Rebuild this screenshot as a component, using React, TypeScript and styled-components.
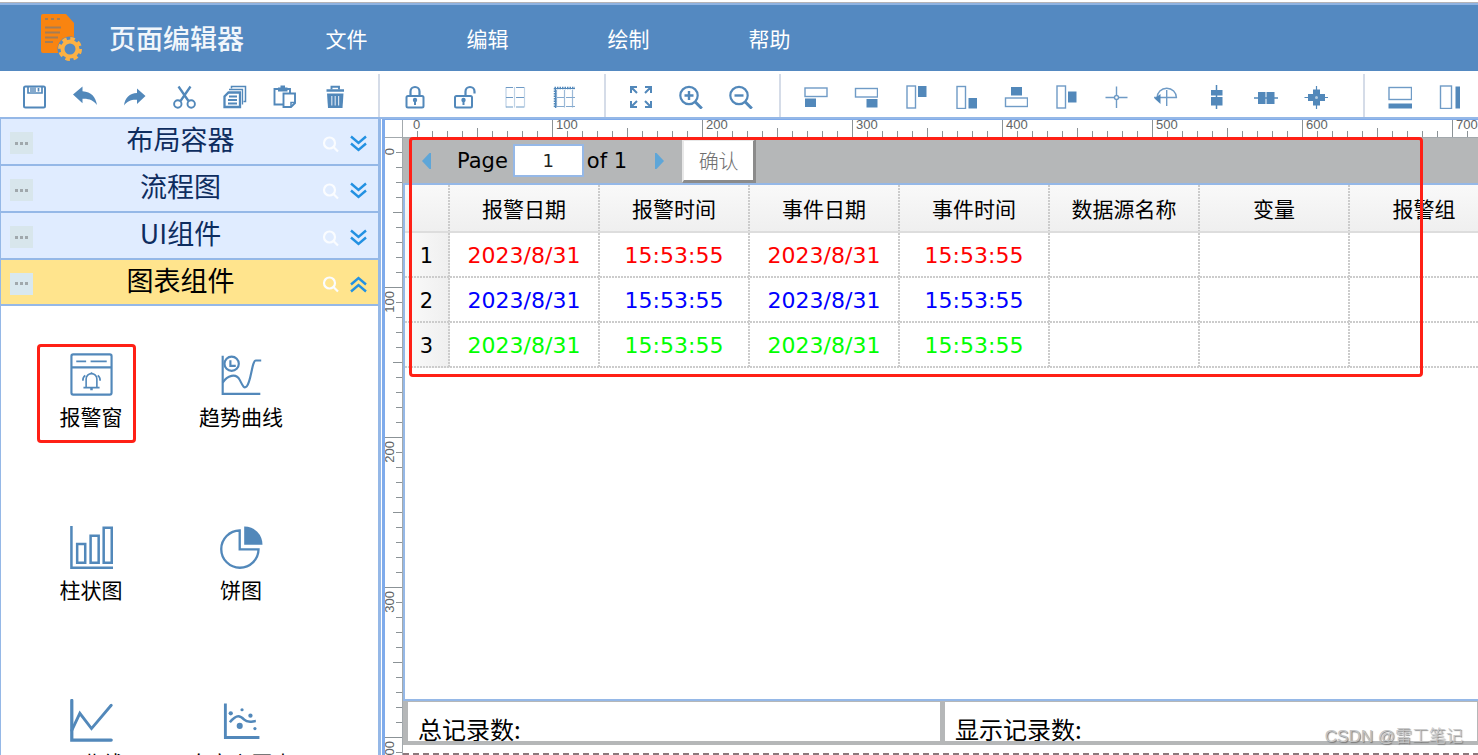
import React from 'react';
import styled, { createGlobalStyle } from 'styled-components';

const CJK = '"Noto Sans CJK SC", "Noto Sans", sans-serif';
const LATIN = '"DejaVu Sans", "Noto Sans CJK SC", sans-serif';
const LINE = '#95b8e7';
const INK = '#5288ba';

const GlobalStyle = createGlobalStyle`
  * { box-sizing: border-box; }
  body { margin: 0; background: #fff; overflow: hidden; }
  button { border: 0; padding: 0; background: none; color: inherit; font: inherit; cursor: pointer; }
  svg { display: block; }
`;

const Shell = styled.div`
  display: flex;
  flex-direction: column;
  height: 100vh;
  overflow: hidden;
  padding-top: 2px;
  font-family: ${CJK};
  font-weight: 400;
  color: #000;
`;

const Header = styled.header`
  flex: none;
  display: flex;
  align-items: center;
  height: 69px;
  padding-top: 2px;
  border-top: 1px solid #b5b3b6;
  box-shadow: inset 0 2px 0 #8fb3e2;
  background: #5489c1;
  color: #fff;
`;

const Brand = styled.div`
  display: flex;
  align-items: center;
  gap: 26px;
  width: 276px;
  padding-left: 39px;
`;

const BrandName = styled.h1`
  margin: 0;
  font-size: 27px;
  line-height: 36px;
  font-weight: 500;
  white-space: nowrap;
  color: #f1f6fb;
`;

const Menu = styled.nav`
  display: flex;
`;

const MenuItem = styled.button`
  width: 141px;
  height: 60px;
  font-size: 21px;
`;

const Toolbar = styled.div`
  flex: none;
  display: flex;
  height: 46px;
  padding-top: 3px;
  overflow: hidden;
`;

const ToolGroup = styled.div<{ $tail: number }>`
  flex: none;
  display: flex;
  padding: 0 ${p => p.$tail}px 0 10px;
  border-right: 2px solid #d5dce8;
`;

const Tool = styled.button`
  flex: none;
  display: grid;
  place-items: center;
  width: 50px;
  padding-top: 3px;
`;

const Workspace = styled.div`
  flex: 1;
  display: flex;
  min-height: 0;
  border-top: 2px solid ${LINE};
`;

const Sidebar = styled.aside`
  flex: none;
  width: 381px;
  overflow: hidden;
  border: solid ${LINE};
  border-width: 0 3px 0 1px;
`;

const Section = styled.div<{ $open?: boolean }>`
  display: flex;
  align-items: center;
  height: ${p => (p.$open ? 46 : 47)}px;
  padding: 0 11px 0 9px;
  border-bottom: 2px solid ${LINE};
  background: ${p => (p.$open ? '#ffe48d' : '#e0ecff')};
  color: ${p => (p.$open ? '#000' : '#0e2d5f')};
`;

const More = styled.button<{ $open?: boolean }>`
  display: flex;
  align-items: center;
  justify-content: center;
  gap: 2px;
  width: 23px;
  height: 22px;
  margin-top: 3px;
  background: ${p => (p.$open ? '#d9e8ef' : '#d8e6ec')};
`;

const Dot = styled.span`
  width: 3px;
  height: 3px;
  background: #a0a8ac;
`;

const SectionTitle = styled.button`
  flex: 1;
  padding: 0 14px 5px 20px;
  font-size: 27px;
  line-height: 38px;
`;

const SectionTools = styled.div`
  display: flex;
  align-items: center;
  gap: 10px;
  padding-top: 4px;
`;

const Palette = styled.div`
  display: grid;
  grid-template-columns: 150px 150px;
  row-gap: 74px;
  padding: 38px 0 0 15px;
`;

const PaletteItem = styled.button`
  position: relative;
  display: flex;
  flex-direction: column;
  align-items: center;
  gap: 6px;
  height: 99px;
  padding-top: 9px;
  font-size: 21px;
  line-height: 28px;
  white-space: nowrap;
`;

const Marker = styled.span<{ $x: number; $y: number; $w: number; $h: number }>`
  position: absolute;
  left: ${p => p.$x}px;
  top: ${p => p.$y}px;
  width: ${p => p.$w}px;
  height: ${p => p.$h}px;
  border: 3px solid #ff2016;
  border-radius: 4px;
  pointer-events: none;
`;

const Editor = styled.main`
  position: relative;
  flex: 1;
  min-width: 0;
  display: grid;
  grid-template: 18px 1fr / 18px 1fr;
  margin-left: 1px;
  border: solid #7fabeb;
  border-width: 1px 0 0 3px;
`;

const Corner = styled.div`
  border: solid #a3a9ad;
  border-width: 0 1px 1px 0;
`;

const RulerTop = styled.div`
  overflow: hidden;
  border-bottom: 1px solid #a3a9ad;
`;

const RulerLeft = styled.div`
  overflow: hidden;
  min-height: 0;
  border-right: 1px solid #a3a9ad;
`;

const Stage = styled.div`
  display: flex;
  flex-direction: column;
  min-width: 0;
  min-height: 0;
  overflow: hidden;
`;

const Pager = styled.div`
  flex: none;
  display: flex;
  align-items: center;
  height: 45px;
  padding: 1px 0 0 18px;
  background: #b5b7b8;
  font-family: ${LATIN};
  font-size: 21px;
`;

const PageLabel = styled.label`
  display: flex;
  align-items: center;
  gap: 5px;
  margin: 0 3px 0 25px;
`;

const PageInput = styled.input`
  width: 71px;
  height: 33px;
  margin-bottom: 2px;
  padding: 0;
  border: 2px solid ${LINE};
  background: #fff;
  text-align: center;
  font: 18px ${LATIN};
  color: #222;
`;

const NextButton = styled.button`
  margin: 0 17px 0 27px;
`;

const Confirm = styled.button`
  width: 74px;
  height: 44px;
  border: solid;
  border-width: 2px 3px 3px 2px;
  border-color: #e8e8e8 #8b8b8b #8b8b8b #e8e8e8;
  background: #fff;
  color: #6e6e6e;
  font: 300 20px ${CJK};
`;

const GridPanel = styled.div`
  flex: none;
  height: 518px;
  overflow: hidden;
  border: solid ${LINE};
  border-width: 2px 0 2px 2px;
`;

const dotsDown = 'repeating-linear-gradient(to bottom, #ccc 0 2px, transparent 2px 3px) right top / 2px 100% no-repeat';
const dotsAcross = 'repeating-linear-gradient(to right, #ccc 0 2px, transparent 2px 3px) left bottom / 100% 2px no-repeat';

const Table = styled.table`
  width: 1095px;
  table-layout: fixed;
  border-collapse: separate;
  border-spacing: 0;
  text-align: center;
`;

const HeadCell = styled.th<{ $narrow?: boolean }>`
  width: ${p => (p.$narrow ? 45 : 150)}px;
  height: 48px;
  padding: 0 2px 1px 0;
  border-bottom: 2px solid #ddd;
  background: ${dotsDown}, linear-gradient(#f9f9f9, #efefef);
  font-size: 21px;
  line-height: 28px;
  font-weight: 400;
`;

const RowHead = styled.th`
  height: 45px;
  padding: 0 2px 0 0;
  background: ${dotsDown}, ${dotsAcross}, linear-gradient(to right, #fafafa, #efefef);
  font: 400 21px/28px ${LATIN};
`;

const Cell = styled.td<{ $color: string }>`
  height: 45px;
  padding: 0 2px 0 0;
  background: ${dotsDown}, ${dotsAcross};
  color: ${p => p.$color};
  font: 400 22px/28px ${LATIN};
`;

const Totals = styled.div`
  flex: none;
  display: grid;
  grid-template-columns: 1fr 1fr;
  height: 44px;
  border: solid #b5b7b8;
  border-width: 1px 1px 4px 0;
`;

const Total = styled.div`
  height: 39px;
  padding: 11px 0 0 10px;
  overflow: hidden;
  border-left: 5px solid #b5b7b8;
  font-size: 24px;
  line-height: 32px;
`;

const PageEdge = styled.div`
  flex: none;
  height: 2px;
  margin-top: 8px;
  background: repeating-linear-gradient(to right, #8c787c 0 6px, transparent 6px 10px);
`;

const Watermark = styled.div`
  position: absolute;
  right: 15px;
  bottom: 6px;
  font: 300 17px/24px "Liberation Sans", ${CJK};
  color: #c4c4c4;
  text-shadow: 1px 1px 1px #777;
`;

type IconProps = { size?: number; children: React.ReactNode };

const Icon = ({ size = 24, children }: IconProps) => (
  <svg width={size} height={size} viewBox="0 0 24 24" fill="none" stroke={INK} strokeWidth="1.5" aria-hidden="true">
    {children}
  </svg>
);

const solid = { fill: INK, stroke: 'none' };
const frame = { stroke: '#6f9bc6', strokeWidth: 1.4 };

const fileTools: [string, React.ReactNode][] = [
  ['保存', <><rect x="1" y="1.500" width="21" height="21" rx="1.500" strokeWidth="2" /><path d="M5 2v6h14V2M15.500 3v3.500" strokeWidth="1.700" /><path d="M7 2h6v5.500H7z" fill="#86aacd" stroke="none" /></>],
  ['撤销', <path {...solid} d="M0 9.500 9.500 1.500v4.700C18.500 7 22.500 11.500 24 20c-3.600-4.500-7.500-6.500-14.500-6.200v4.500z" />],
  ['重做', <path {...solid} d="M22.500 11 14 3.500v4.500C6.500 8.500 2 12.500 1 20.500c3.200-4.200 6.800-6 13-5.700V19z" />],
  ['剪切', <><path d="M5.500 1.500 15.500 16M17.500 1.500 7.500 16" strokeWidth="2.300" /><circle cx="4.800" cy="19" r="3.700" strokeWidth="1.900" /><circle cx="18.200" cy="19" r="3.700" strokeWidth="1.900" /></>],
  ['复制', <><path d="M8.500 3.500V1.500h14v15h-2" strokeWidth="1.500" /><path d="M6 4.500h13.500v15" strokeWidth="1.300" /><path d="M5.500 7.500H17v14.500H1.500V11.500z" strokeWidth="2.300" /><path d="M6 11.500h8M5 15h9M5 18.500h9" strokeWidth="1.900" /></>],
  ['粘贴', <><path d="M10 19.500H1.500V4H17v4" strokeWidth="1.900" /><path {...solid} d="M5 2.500h2.500V.5h4.500v2h2.500V6.500H5z" /><path d="M10.500 8.500H22v9.500l-4 4h-7.500z" fill="#fff" strokeWidth="1.900" /><path d="M18 22v-4.500h4.500" /></>],
  ['删除', <><path d="M3.500 5.500h17.500" strokeWidth="2.500" /><path d="M8.500 4.500V1.700h7.500v2.800" strokeWidth="1.900" /><path {...solid} d="M4 8.500h16.500L19.500 23H5z" /><path d="M8.800 11v9.500M12.200 11v9.500M15.600 11v9.500" stroke="#d5e2ef" strokeWidth="1.200" /></>],
];

const gridTools: [string, React.ReactNode][] = [
  ['锁定', <><path d="M7.500 11V6.500a4.500 4.500 0 0 1 9 0V11" strokeWidth="2.200" /><rect x="3.500" y="11" width="17" height="11.500" rx="1.500" strokeWidth="2" /><circle cx="12" cy="15" r="2.200" {...solid} /><path d="M12 15v5" strokeWidth="2" /></>],
  ['解锁', <><path d="M12.500 11V6.500a4.500 4.500 0 0 1 9 0V8.500" strokeWidth="2.200" /><rect x="2" y="11" width="17" height="11.500" rx="1.500" strokeWidth="2" /><circle cx="10.500" cy="15" r="2.200" {...solid} /><path d="M10.500 15v5" strokeWidth="2" /></>],
  ['网格', <g strokeWidth="1.200"><path d="M3 2v20.500M11.500 2v20.500M21.500 2v20.500" stroke="#c0d3e6" /><path d="M3 2.500h7M13 2.500h8M3 12.500h7M13 12.500h8M3 22h7M13 22h8" stroke="#6f9bc6" /></g>],
  ['对齐网格', <g strokeWidth="1.200"><path d="M3.500 5v17.500M11.500 5v17.500M19.500 5v17.500" stroke="#9dbad8" /><path d="M4 12.500h7M13 12.500h9M4 21.500h7M13 21.500h9" stroke="#84a9ce" /><path d="M1.500 3H22M2 3v20" strokeWidth="2.500" strokeDasharray="1.500 1" /><path d="M2 3.500h20M2.500 3v20" /></g>],
];

const zoomTools: [string, React.ReactNode][] = [
  ['适应窗口', <g strokeWidth="2"><path d="M2 8V2h6M2.500 2.500l5.500 5.500M16 2h6v6M21.500 2.500 16 8M2 16v6h6M2.500 21.500 8 16M22 16v6h-6M21.500 21.500 16 16" /></g>],
  ['放大', <><circle cx="10" cy="10.500" r="8.700" strokeWidth="2.200" /><path d="m16.300 17 6.500 6.500" strokeWidth="3" /><path d="M5.500 10.500h9M10 6v9" strokeWidth="2.400" /></>],
  ['缩小', <><circle cx="10" cy="10.500" r="8.700" strokeWidth="2.200" /><path d="m16.300 17 6.500 6.500" strokeWidth="3" /><path d="M5.500 10.500h9" strokeWidth="2.400" /></>],
];

const alignTools: [string, React.ReactNode][] = [
  ['左对齐', <><rect x="1" y="3" width="22" height="8.500" {...frame} /><path {...solid} d="M1 13.500h11V22H1z" /></>],
  ['右对齐', <><rect x="1.500" y="3.500" width="22" height="8.500" {...frame} /><path {...solid} d="M12.500 14h11v8.500h-11z" /></>],
  ['顶对齐', <><rect x="3" y="1" width="8.500" height="22" {...frame} /><path {...solid} d="M14 1h8.500v11H14z" /></>],
  ['底对齐', <><rect x="3" y="1.500" width="8.500" height="22" {...frame} /><path {...solid} d="M14.500 13h8.500v10.500h-8.500z" /></>],
  ['水平居中', <><path {...solid} d="M7 2h11v8.500H7z" /><rect x="1.500" y="13" width="22" height="8.500" {...frame} /></>],
  ['垂直居中', <><rect x="3" y="1" width="8.500" height="22" {...frame} /><path {...solid} d="M14 6.500h8.500v11H14z" /></>],
  ['中心对齐', <g {...frame}><path d="M1.500 12.500h22M12.500 1.500V23" /><circle cx="12.500" cy="12.500" r="2" fill="#fff" /></g>],
  ['旋转中心', <g {...frame}><path d="M3 13a9.700 9.700 0 1 1 19.500 0M0 12.500h23M12.700 5v16" /><path {...solid} d="M.5 13.500 6.500 9v10z" /></g>],
  ['垂直分布', <><path d="M12.500 0v24" /><path {...solid} d="M7 5h11.500v5.500H7zM7 12h11.500v8.500H7z" /></>],
  ['水平分布', <><path d="M0 13h24" /><path {...solid} d="M4 7h7.500v12H4zM12.500 7h8v12h-8z" /></>],
  ['居中分布', <><path d="M12.500 1v23M.5 12.500H24" strokeWidth="1.200" /><path {...solid} d="M9 4.500h7V9h5v7h-5v4.500H9V16H4V9h5z" /><circle cx="12.500" cy="12.500" r="1.500" fill="#b5cde2" stroke="none" /></>],
];

const sizeTools: [string, React.ReactNode][] = [
  ['等宽', <><rect x="1" y="2.500" width="22.500" height="12" {...frame} /><path {...solid} d="M.5 18.500h23.500V23.500H.5z" /></>],
  ['等高', <><rect x="2.500" y="1" width="11" height="22.500" {...frame} /><path {...solid} d="M17.500 1.500H22v22h-4.500z" /></>],
];

const toolGroups: [[string, React.ReactNode][], number][] = [
  [fileTools, 18], [gridTools, 14], [zoomTools, 13], [alignTools, 22], [sizeTools, 40],
];

const paletteItems: [string, React.ReactNode, boolean][] = [
  ['报警窗', <><rect x=".8" y=".8" width="22.400" height="22.400" rx="1" strokeWidth="1.200" /><path d="M.8 8h22.400" strokeWidth="1.200" /><path d="M3.500 4.700h5.500M11.500 4.700h9" strokeWidth=".9" /><path d="M9 19v-4.500a3 3 0 0 1 6 0V19M7.500 19.300h9M11.300 20.300h1.400M12 10.700v1M8.500 12.500q-1.500 1.200-1.300 3M15.500 12.500q1.500 1.200 1.300 3" strokeWidth=".9" /></>, true],
  ['趋势曲线', <><path d="M1.500 1.500v21.300h21" strokeWidth="1.200" /><circle cx="6.500" cy="6" r="4" strokeWidth="1.200" /><path d="M5.800 4v3.200h3" strokeWidth="1.200" /><path d="M1.500 16.500C4 12.500 9 11 11 15s2.500 5 4 3.500c2.500-3 2.800-14.300 5-14.300h3" strokeWidth="1.200" /></>, false],
  ['柱状图', <g strokeWidth="1.400"><path d="M.8 0v23.300H24" /><path d="M4 10h4.500v10.500H4zM11.500 5.500H16v15h-4.500zM18.800 1h4.500v19.500h-4.500z" /></g>, false],
  ['饼图', <><path d="M11 2.500A10.400 10.400 0 1 0 21.500 13H11z" strokeWidth="1.300" /><path {...solid} d="M13.500.3a10 10 0 0 1 10.200 10.200H13.500z" /></>, false],
  ['XY曲线', <g strokeLinecap="round"><path d="M1 .8v22.100h22" strokeWidth="1.800" /><path d="M1 17.500 5.500 8l6.500 8.500L23 3.500" strokeWidth="1.600" /></g>, false],
  ['自定义图表', <><path d="M3 2.500v19h19" strokeWidth="1.600" /><path d="M5.500 13c4-5 6-3.500 8-1.500s4 1 6.500.8" strokeWidth="1.400" /><g {...solid}><circle cx="6" cy="8" r="1.200" /><circle cx="12.300" cy="6" r=".9" /><circle cx="17" cy="9.300" r="1.200" /><circle cx="11" cy="15" r="1.700" /><circle cx="19.500" cy="16.500" r=".9" /></g></>, false],
];

const sections = ['布局容器', '流程图', 'UI组件', '图表组件'];
const columns = ['报警日期', '报警时间', '事件日期', '事件时间', '数据源名称', '变量', '报警组'];
const rowColors = ['#ff0000', '#0000ff', '#00ff00'];
const rowValues = ['2023/8/31', '15:53:55', '2023/8/31', '15:53:55', '', '', ''];

/* Ruler marks every 10 units (15px), longer at 50 and full height at 100. */
const Ruler = ({ vertical = false }: { vertical?: boolean }) => {
  const count = 200;
  const marks = Array.from({ length: count }, (_, i) => i);
  return (
    <svg width={vertical ? 17 : count * 15} height={vertical ? count * 15 : 17} aria-hidden="true">
      {marks.slice(1).map(i => {
        const at = i * 15;
        const from = i % 10 === 0 ? 0 : i % 5 === 0 ? 8 : 11;
        return vertical
          ? <rect key={i} x={from} y={at - 1} width={17 - from} height="1" fill="#8b9296" />
          : <rect key={i} x={at - 1} y={from} width="1" height={17 - from} fill="#8b9296" />;
      })}
      {marks.filter(i => i % 10 === 0).map(i => {
        const at = i * 15 + (i === 0 ? 10 : 3);
        const common = { fontFamily: 'Liberation Sans, sans-serif', fontSize: 13, fill: '#606466' };
        return vertical
          ? <text key={i} {...common} textAnchor="end" transform={`translate(9 ${at}) rotate(-90)`}>{i * 10}</text>
          : <text key={i} {...common} x={at} y="9">{i * 10}</text>;
      })}
    </svg>
  );
};

const Logo = () => (
  <svg width="44" height="48" viewBox="0 0 44 48" aria-hidden="true">
    <path d="M4 0h23l8 9v30H4q-2 0-2-2V2q0-2 2-2z" fill="#f98410" />
    <path d="M6 5h3M12 5h3M18 5h3" stroke="#a37d57" strokeWidth="2" />
    <path d="M6 13.500h16M6 18.500h15M6 23.500h13M6 28h8" stroke="#a37d57" strokeWidth="1.800" />
    <circle cx="31" cy="35" r="12.500" fill="#5489c1" />
    <circle cx="31" cy="35" r="10" fill="none" stroke="#fcb144" strokeWidth="4" strokeDasharray="4.400 3.450" />
    <circle cx="31" cy="35" r="7.500" fill="#5489c1" stroke="#fcb144" strokeWidth="4" />
  </svg>
);

const Search = () => (
  <svg width="18" height="18" viewBox="0 0 18 18" fill="none" stroke="#fafcff" strokeWidth="2.200" aria-hidden="true">
    <circle cx="7.500" cy="8" r="5.500" /><path d="m11.500 12 4.500 4.500" />
  </svg>
);

const Chevrons = ({ up }: { up?: boolean }) => (
  <svg width="17" height="17" viewBox="0 0 17 17" fill="none" stroke="#2391e2" strokeWidth="2.400" aria-hidden="true">
    {up ? <path d="m1 8.500 7.500-6.500L16 8.500M1 15.500 8.500 9l7.500 6.500" /> : <path d="m1 1.500 7.500 6.500L16 1.500M1 8.500 8.500 15 16 8.500" />}
  </svg>
);

const Arrow = ({ right }: { right?: boolean }) => (
  <svg width="11" height="16" viewBox="0 0 11 16" aria-hidden="true">
    <path d={right ? 'M1 0h1.500L10 8l-7.500 8H1z' : 'M10 0H8.500L1 8l7.500 8H10z'} fill="#5ea6d8" />
  </svg>
);

export default function App() {
  return (
    <Shell>
      <GlobalStyle />
      <Header>
        <Brand><Logo /><BrandName>页面编辑器</BrandName></Brand>
        <Menu>
          {['文件', '编辑', '绘制', '帮助'].map(m => <MenuItem key={m}>{m}</MenuItem>)}
        </Menu>
      </Header>
      <Toolbar>
        {toolGroups.map(([tools, tail], g) => (
          <ToolGroup key={g} $tail={tail}>
            {tools.map(([name, art]) => <Tool key={name} aria-label={name}><Icon>{art}</Icon></Tool>)}
          </ToolGroup>
        ))}
      </Toolbar>
      <Workspace>
        <Sidebar>
          {sections.map((name, i) => {
            const open = i === 3;
            return (
              <Section key={name} $open={open}>
                <More $open={open} aria-label="更多"><Dot /><Dot /><Dot /></More>
                <SectionTitle aria-expanded={open}>{name}</SectionTitle>
                <SectionTools>
                  <button aria-label="搜索"><Search /></button>
                  <button aria-label={open ? '收起' : '展开'}><Chevrons up={open} /></button>
                </SectionTools>
              </Section>
            );
          })}
          <Palette>
            {paletteItems.map(([name, art, marked]) => (
              <PaletteItem key={name}>
                <Icon size={43}>{art}</Icon>
                {name}
                {marked && <Marker $x={21} $y={0} $w={99} $h={99} />}
              </PaletteItem>
            ))}
          </Palette>
        </Sidebar>
        <Editor>
          <Corner />
          <RulerTop><Ruler /></RulerTop>
          <RulerLeft><Ruler vertical /></RulerLeft>
          <Stage>
            <Pager>
              <button aria-label="上一页"><Arrow /></button>
              <PageLabel>Page <PageInput defaultValue="1" /></PageLabel>
              of 1
              <NextButton aria-label="下一页"><Arrow right /></NextButton>
              <Confirm>确认</Confirm>
            </Pager>
            <GridPanel>
              <Table>
                <thead>
                  <tr>
                    <HeadCell $narrow />
                    {columns.map(c => <HeadCell key={c} scope="col">{c}</HeadCell>)}
                  </tr>
                </thead>
                <tbody>
                  {rowColors.map((color, r) => (
                    <tr key={color}>
                      <RowHead scope="row">{r + 1}</RowHead>
                      {rowValues.map((v, c) => <Cell key={c} $color={color}>{v}</Cell>)}
                    </tr>
                  ))}
                </tbody>
              </Table>
            </GridPanel>
            <Totals>
              <Total>总记录数:</Total>
              <Total>显示记录数:</Total>
            </Totals>
            <PageEdge />
          </Stage>
          <Marker $x={24} $y={17} $w={1014} $h={240} />
          <Watermark>CSDN @雷工笔记</Watermark>
        </Editor>
      </Workspace>
    </Shell>
  );
}
